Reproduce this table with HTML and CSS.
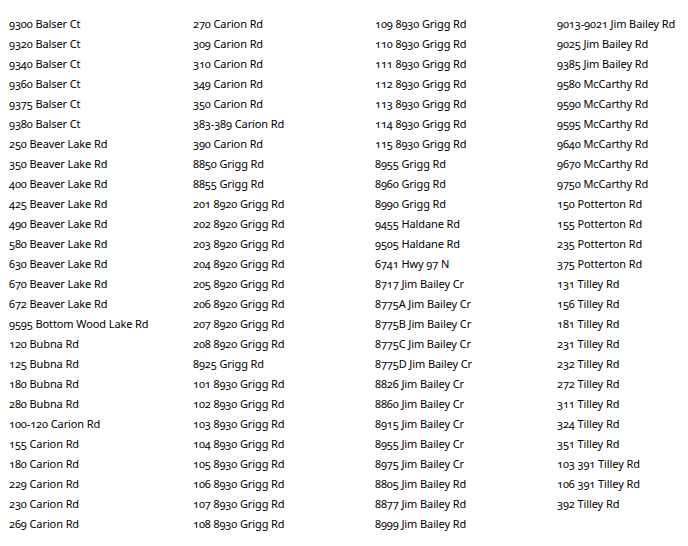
FILE: index.html
```html
<!DOCTYPE html>
<html lang="en">
<head>
  <meta charset="UTF-8">
  <title>Addresses</title>
  <link rel="stylesheet" href="styles.css">
</head>
<body>
  <div class="cols">
    <ul class="col">
      <li>9300 Balser Ct</li>
      <li>9320 Balser Ct</li>
      <li>9340 Balser Ct</li>
      <li>9360 Balser Ct</li>
      <li>9375 Balser Ct</li>
      <li>9380 Balser Ct</li>
      <li>250 Beaver Lake Rd</li>
      <li>350 Beaver Lake Rd</li>
      <li>400 Beaver Lake Rd</li>
      <li>425 Beaver Lake Rd</li>
      <li>490 Beaver Lake Rd</li>
      <li>580 Beaver Lake Rd</li>
      <li>630 Beaver Lake Rd</li>
      <li>670 Beaver Lake Rd</li>
      <li>672 Beaver Lake Rd</li>
      <li>9595 Bottom Wood Lake Rd</li>
      <li>120 Bubna Rd</li>
      <li>125 Bubna Rd</li>
      <li>180 Bubna Rd</li>
      <li>280 Bubna Rd</li>
      <li>100-120 Carion Rd</li>
      <li>155 Carion Rd</li>
      <li>180 Carion Rd</li>
      <li>229 Carion Rd</li>
      <li>230 Carion Rd</li>
      <li>269 Carion Rd</li>
    </ul>
    <ul class="col">
      <li>270 Carion Rd</li>
      <li>309 Carion Rd</li>
      <li>310 Carion Rd</li>
      <li>349 Carion Rd</li>
      <li>350 Carion Rd</li>
      <li>383-389 Carion Rd</li>
      <li>390 Carion Rd</li>
      <li>8850 Grigg Rd</li>
      <li>8855 Grigg Rd</li>
      <li>201 8920 Grigg Rd</li>
      <li>202 8920 Grigg Rd</li>
      <li>203 8920 Grigg Rd</li>
      <li>204 8920 Grigg Rd</li>
      <li>205 8920 Grigg Rd</li>
      <li>206 8920 Grigg Rd</li>
      <li>207 8920 Grigg Rd</li>
      <li>208 8920 Grigg Rd</li>
      <li>8925 Grigg Rd</li>
      <li>101 8930 Grigg Rd</li>
      <li>102 8930 Grigg Rd</li>
      <li>103 8930 Grigg Rd</li>
      <li>104 8930 Grigg Rd</li>
      <li>105 8930 Grigg Rd</li>
      <li>106 8930 Grigg Rd</li>
      <li>107 8930 Grigg Rd</li>
      <li>108 8930 Grigg Rd</li>
    </ul>
    <ul class="col">
      <li>109 8930 Grigg Rd</li>
      <li>110 8930 Grigg Rd</li>
      <li>111 8930 Grigg Rd</li>
      <li>112 8930 Grigg Rd</li>
      <li>113 8930 Grigg Rd</li>
      <li>114 8930 Grigg Rd</li>
      <li>115 8930 Grigg Rd</li>
      <li>8955 Grigg Rd</li>
      <li>8960 Grigg Rd</li>
      <li>8990 Grigg Rd</li>
      <li>9455 Haldane Rd</li>
      <li>9505 Haldane Rd</li>
      <li>6741 Hwy 97 N</li>
      <li>8717 Jim Bailey Cr</li>
      <li>8775A Jim Bailey Cr</li>
      <li>8775B Jim Bailey Cr</li>
      <li>8775C Jim Bailey Cr</li>
      <li>8775D Jim Bailey Cr</li>
      <li>8826 Jim Bailey Cr</li>
      <li>8860 Jim Bailey Cr</li>
      <li>8915 Jim Bailey Cr</li>
      <li>8955 Jim Bailey Cr</li>
      <li>8975 Jim Bailey Cr</li>
      <li>8805 Jim Bailey Rd</li>
      <li>8877 Jim Bailey Rd</li>
      <li>8999 Jim Bailey Rd</li>
    </ul>
    <ul class="col">
      <li>9013-9021 Jim Bailey Rd</li>
      <li>9025 Jim Bailey Rd</li>
      <li>9385 Jim Bailey Rd</li>
      <li>9580 McCarthy Rd</li>
      <li>9590 McCarthy Rd</li>
      <li>9595 McCarthy Rd</li>
      <li>9640 McCarthy Rd</li>
      <li>9670 McCarthy Rd</li>
      <li>9750 McCarthy Rd</li>
      <li>150 Potterton Rd</li>
      <li>155 Potterton Rd</li>
      <li>235 Potterton Rd</li>
      <li>375 Potterton Rd</li>
      <li>131 Tilley Rd</li>
      <li>156 Tilley Rd</li>
      <li>181 Tilley Rd</li>
      <li>231 Tilley Rd</li>
      <li>232 Tilley Rd</li>
      <li>272 Tilley Rd</li>
      <li>311 Tilley Rd</li>
      <li>324 Tilley Rd</li>
      <li>351 Tilley Rd</li>
      <li>103 391 Tilley Rd</li>
      <li>106 391 Tilley Rd</li>
      <li>392 Tilley Rd</li>
    </ul>
  </div>
</body>
</html>
```

FILE: styles.css
```css
body {
  margin: 0;
  padding: 14px 0 0 9px;
  background: #fff;
  color: #000;
  font-family: "Noto Sans", "Open Sans", sans-serif;
  font-size: 11px;
  letter-spacing: -0.1px;
  font-variant-numeric: oldstyle-nums;
}

.cols {
  display: grid;
  grid-template-columns: 184px 182px 182px auto;
}

.col {
  list-style: none;
  margin: 0;
  padding: 0;
}

.col li {
  height: 20px;
  line-height: 20px;
  white-space: nowrap;
}
```
